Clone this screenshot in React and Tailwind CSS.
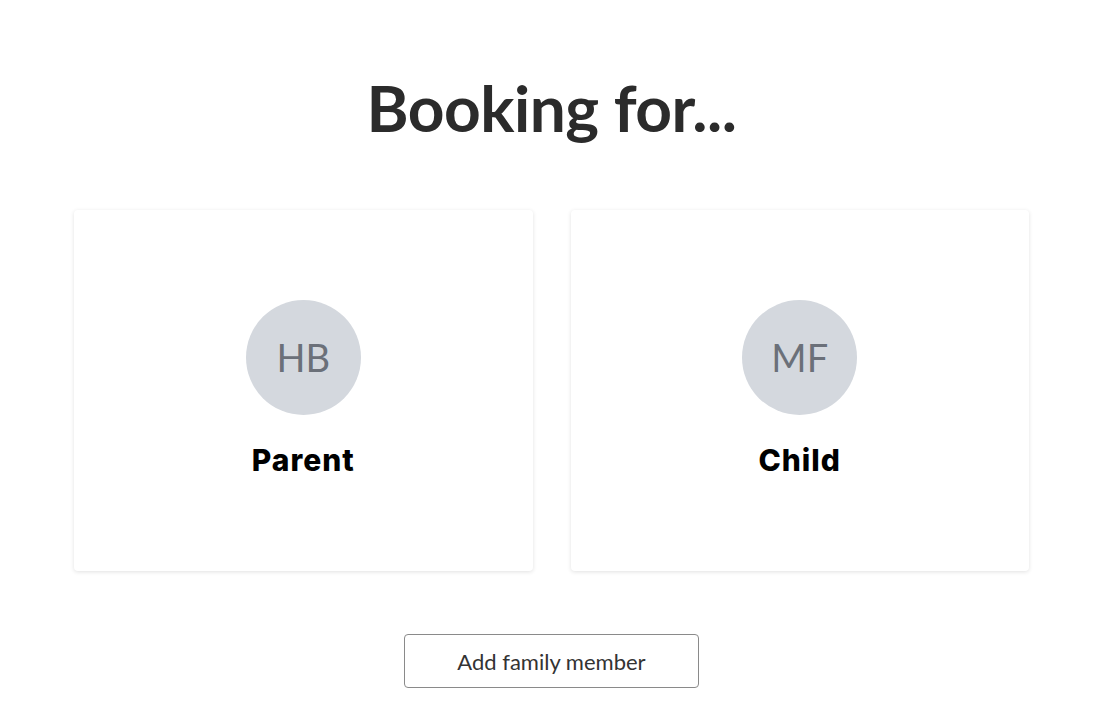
const MEMBERS = [
  { initials: "HB", label: "Parent" },
  { initials: "MF", label: "Child" },
];

export default function App() {
  return (
    <div className="min-h-screen bg-white font-['Lato',sans-serif]">
      <div className="ml-[74px] w-[955px] pt-[68px] flex flex-col items-center">
        <h1 className="text-[64px] leading-[80px] font-bold text-[#2b2b2b] tracking-[-0.5px]">
          Booking for...
        </h1>

        <div className="mt-[62px] grid grid-cols-2 gap-[38px] w-full">
          {MEMBERS.map((m) => (
            <button
              key={m.label}
              className="h-[361px] rounded-[4px] bg-white shadow-[0_1px_4px_rgba(0,0,0,0.12)] flex flex-col items-center pt-[90px]"
            >
              <div className="h-[115px] w-[115px] rounded-full bg-[#d4d8de] flex items-center justify-center">
                <span className="text-[38px] text-[#6b7079]">{m.initials}</span>
              </div>
              <span className="mt-[26px] font-['Inter',sans-serif] text-[30px] leading-[38px] font-extrabold text-black tracking-[1px]">
                {m.label}
              </span>
            </button>
          ))}
        </div>

        <button className="mt-[63px] h-[54px] w-[295px] rounded-[4px] border border-[#8a8a8a] bg-white text-[22px] text-[#333333]">
          Add family member
        </button>
      </div>
    </div>
  );
}
